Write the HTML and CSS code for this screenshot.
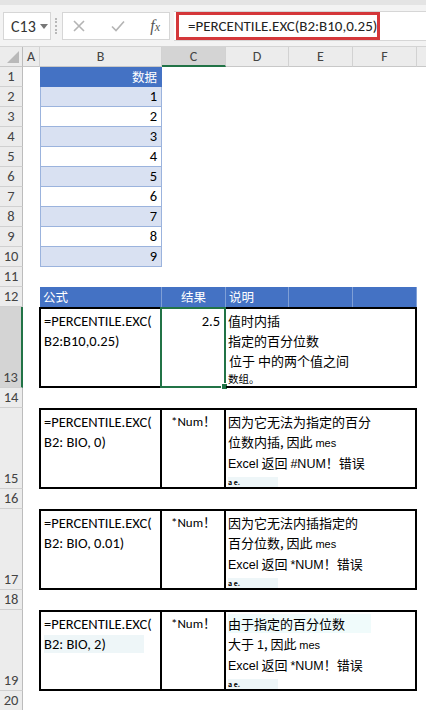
FILE: index.html
```html
<!DOCTYPE html>
<html lang="zh-CN">
<head>
  <meta charset="UTF-8">
  <title>PERCENTILE.EXC</title>
  <link rel="stylesheet" href="styles.css">
</head>
<body>
  <div class="app">
    <div class="formula-bar">
      <div class="name-box">C13<span class="caret"></span></div>
      <div class="grip"></div>
      <div class="fx-buttons">
        <svg class="ico" width="12" height="12" viewBox="0 0 12 12"><path d="M1 1 L11 11 M11 1 L1 11" stroke="#b4b4b4" stroke-width="1.6" fill="none"/></svg>
        <svg class="ico" width="14" height="12" viewBox="0 0 14 12"><path d="M1 6.5 L5 10.5 L13 1.5" stroke="#b4b4b4" stroke-width="1.6" fill="none"/></svg>
        <span class="fx">f<span class="fx-x">x</span></span>
      </div>
      <div class="formula"><span class="formula-text">=PERCENTILE.EXC(B2:B10,0.25)</span></div>
    </div>

    <div class="sheet">
      <div class="ch corner"><svg width="12" height="12" viewBox="0 0 12 12"><path d="M12 0 L12 12 L0 12 Z" fill="#b9b9b9"/></svg></div>
      <div class="ch">A</div>
      <div class="ch">B</div>
      <div class="ch sel">C</div>
      <div class="ch">D</div>
      <div class="ch">E</div>
      <div class="ch">F</div>
      <div class="ch last"></div>

      <div class="rh">1</div><div class="data head">数据</div>
      <div class="rh">2</div><div class="data band">1</div>
      <div class="rh">3</div><div class="data">2</div>
      <div class="rh">4</div><div class="data band">3</div>
      <div class="rh">5</div><div class="data">4</div>
      <div class="rh">6</div><div class="data band">5</div>
      <div class="rh">7</div><div class="data">6</div>
      <div class="rh">8</div><div class="data band">7</div>
      <div class="rh">9</div><div class="data">8</div>
      <div class="rh">10</div><div class="data band">9</div>
      <div class="rh">11</div>

      <div class="rh">12</div>
      <div class="th col-b">公式</div>
      <div class="th center">结果</div>
      <div class="th">说明</div>
      <div class="th"></div>
      <div class="th"></div>

      <div class="rh sel">13</div>
      <div class="box col-b">
        <div>=PERCENTILE.EXC(</div>
        <div>B2:B10,0.25)</div>
      </div>
      <div class="box res sel">2.5</div>
      <div class="box note">
        <div>值时内插</div>
        <div>指定的百分位数</div>
        <div class="indent">位于 中的两个值之间</div>
        <div class="tiny">数组。</div>
      </div>

      <div class="rh">14</div>

      <div class="rh">15</div>
      <div class="box col-b">
        <div>=PERCENTILE.EXC(</div>
        <div>B2: BIO, 0)</div>
      </div>
      <div class="box res err">*Num！</div>
      <div class="box note">
        <div>因为它无法为指定的百分</div>
        <div>位数内插, 因此 <span class="sm">mes</span></div>
        <div><span class="lat">Excel</span> 返回 <span class="lat">#NUM</span>！错误</div>
        <div class="dots"><span class="tint">a e.</span></div>
      </div>

      <div class="rh">16</div>

      <div class="rh">17</div>
      <div class="box col-b">
        <div>=PERCENTILE.EXC(</div>
        <div>B2: BIO, 0.01)</div>
      </div>
      <div class="box res err">*Num！</div>
      <div class="box note">
        <div>因为它无法内插指定的</div>
        <div>百分位数, 因此 <span class="sm">mes</span></div>
        <div><span class="lat">Excel</span> 返回 <span class="lat">*NUM</span>！错误</div>
        <div class="dots"><span class="tint">a e.</span></div>
      </div>

      <div class="rh">18</div>

      <div class="rh">19</div>
      <div class="box col-b">
        <div>=PERCENTILE.EXC(</div>
        <div><span class="tint">B2: BIO, 2)</span></div>
      </div>
      <div class="box res err">*Num！</div>
      <div class="box note">
        <div><span class="tint wide">由于指定的百分位数</span></div>
        <div>大于 <span class="lat">1</span>, 因此 <span class="sm">mes</span></div>
        <div><span class="lat">Excel</span> 返回 <span class="lat">*NUM</span>！错误</div>
        <div class="dots"><span class="tint">a e.</span></div>
      </div>

      <div class="rh">20</div>
    </div>
  </div>
</body>
</html>
```

FILE: styles.css
```css
body {
  margin: 0;
  background: #fff;
  font-family: Carlito, "Liberation Sans Narrow", "Liberation Sans", "Noto Sans CJK SC", sans-serif;
  color: #000;
}

.app {
  width: 426px;
  height: 710px;
  overflow: hidden;
}

/* formula bar */
.formula-bar {
  height: 47px;
  box-sizing: border-box;
  background: #f3f3f3;
  border-top: 5px solid #e4e4e4;
  border-bottom: 1px solid #d4d4d4;
  display: flex;
  align-items: center;
  padding: 1px 0 0 3px;
}

.name-box {
  width: 48px;
  height: 28px;
  box-sizing: border-box;
  background: #fff;
  border: 1px solid #d6d6d6;
  display: flex;
  align-items: center;
  padding-left: 7px;
  font-size: 16px;
  color: #333;
}

.caret {
  margin-left: 4px;
  border-left: 4px solid transparent;
  border-right: 4px solid transparent;
  border-top: 5px solid #777;
}

.grip {
  width: 0;
  height: 16px;
  margin: 0 5px 0 4px;
  border-left: 2px dotted #b8b8b8;
}

.fx-buttons {
  width: 108px;
  height: 28px;
  box-sizing: border-box;
  background: #fff;
  border: 1px solid #d6d6d6;
  display: flex;
  align-items: center;
  justify-content: space-between;
  padding: 0 9px 0 10px;
}

.fx {
  font-family: "Liberation Serif", serif;
  font-style: italic;
  font-size: 16px;
  color: #555;
}

.fx-x {
  font-size: 12px;
}

.formula {
  flex: 1;
  height: 28px;
  margin-left: 4px;
  background: #fff;
  border-top: 1px solid #d6d6d6;
  border-bottom: 1px solid #d6d6d6;
  display: flex;
  align-items: center;
}

.formula-text {
  margin-left: 2px;
  width: 204px;
  height: 28px;
  box-sizing: border-box;
  border: 3px solid #d4373a;
  display: flex;
  align-items: center;
  padding-left: 9px;
  font-size: 15px;
  color: #222;
  white-space: nowrap;
}

/* sheet */
.sheet {
  display: grid;
  grid-template-columns: 23px 17px 122px 64px 63px 64px 64px 1fr;
  grid-template-rows: repeat(13, 20px) 81px 20px 81px 20px 81px 20px 81px 20px;
  font-size: 14.5px;
}

.ch {
  background: #ececec;
  border-right: 1px solid #d2d2d2;
  border-bottom: 1px solid #c8c8c8;
  color: #444;
  font-size: 14px;
  display: flex;
  align-items: center;
  justify-content: center;
}

.ch.corner {
  align-items: flex-end;
  justify-content: flex-end;
  padding: 0 3px 3px 0;
  border-right-color: #bcbcbc;
}

.ch.sel {
  background: #d4d4d4;
  border-bottom: 2px solid #217346;
}

.ch.last {
  border-right: none;
}

.rh {
  grid-column: 1;
  background: #ececec;
  border-right: 1px solid #bcbcbc;
  border-bottom: 1px solid #d0d0d0;
  color: #444;
  font-size: 14.5px;
  display: flex;
  align-items: flex-end;
  justify-content: center;
  padding-bottom: 1px;
}

.rh.sel {
  background: #d4d4d4;
  border-right: 2px solid #217346;
}

.data {
  grid-column: 3;
  background: #fff;
  border: 1px solid #9bb3dd;
  border-top: none;
  text-align: right;
  padding-right: 4px;
  line-height: 19px;
}

.data.band {
  background: #d9e1f2;
}

.data.head {
  background: #4472c4;
  color: #fff;
  font-family: "Noto Sans CJK SC", sans-serif;
  font-size: 12.5px;
  border-color: #4472c4;
  line-height: 20px;
}

.th {
  background: #4472c4;
  color: #fff;
  font-family: "Noto Sans CJK SC", sans-serif;
  font-size: 12.5px;
  line-height: 20px;
  padding-left: 3px;
  border-right: 1px solid #7f9fd6;
}

.th.center {
  text-align: center;
  padding-left: 0;
}

.col-b {
  grid-column: 3;
}

.box {
  position: relative;
  border: 2px solid #000;
  border-left: none;
  padding: 2px 3px 0;
  line-height: 20px;
  white-space: nowrap;
  overflow: hidden;
}

.box.col-b {
  border-left: 2px solid #000;
  margin-left: -1px;
}

.box.res {
  text-align: right;
  padding-right: 4px;
}

.box.res.err {
  text-align: left;
  padding-left: 9px;
  font-size: 13px;
}

.box.sel {
  border: 2px solid #217346;
  margin-left: -2px;
  overflow: visible;
}

.box.sel::after {
  content: "";
  position: absolute;
  right: -4px;
  bottom: -4px;
  width: 5px;
  height: 5px;
  background: #217346;
  border: 1px solid #fff;
}

.note {
  grid-column: 5 / span 3;
  font-family: "Noto Sans CJK SC", sans-serif;
  font-size: 13px;
  padding-left: 2px;
}

.note .indent {
  padding-left: 1px;
}

.note .tiny {
  font-size: 10.5px;
  line-height: 16px;
}

.note .dots {
  font-size: 7px;
  font-weight: bold;
  line-height: 16px;
}

.sm {
  font-family: "Liberation Sans", sans-serif;
  font-size: 11px;
}

.lat {
  font-family: "Liberation Sans Narrow", "Liberation Sans", sans-serif;
  font-size: 12.5px;
}

.tint {
  background: #eef6f8;
  padding-right: 38px;
}

.tint.wide {
  background: #f0fbfb;
  padding-right: 26px;
}
```
